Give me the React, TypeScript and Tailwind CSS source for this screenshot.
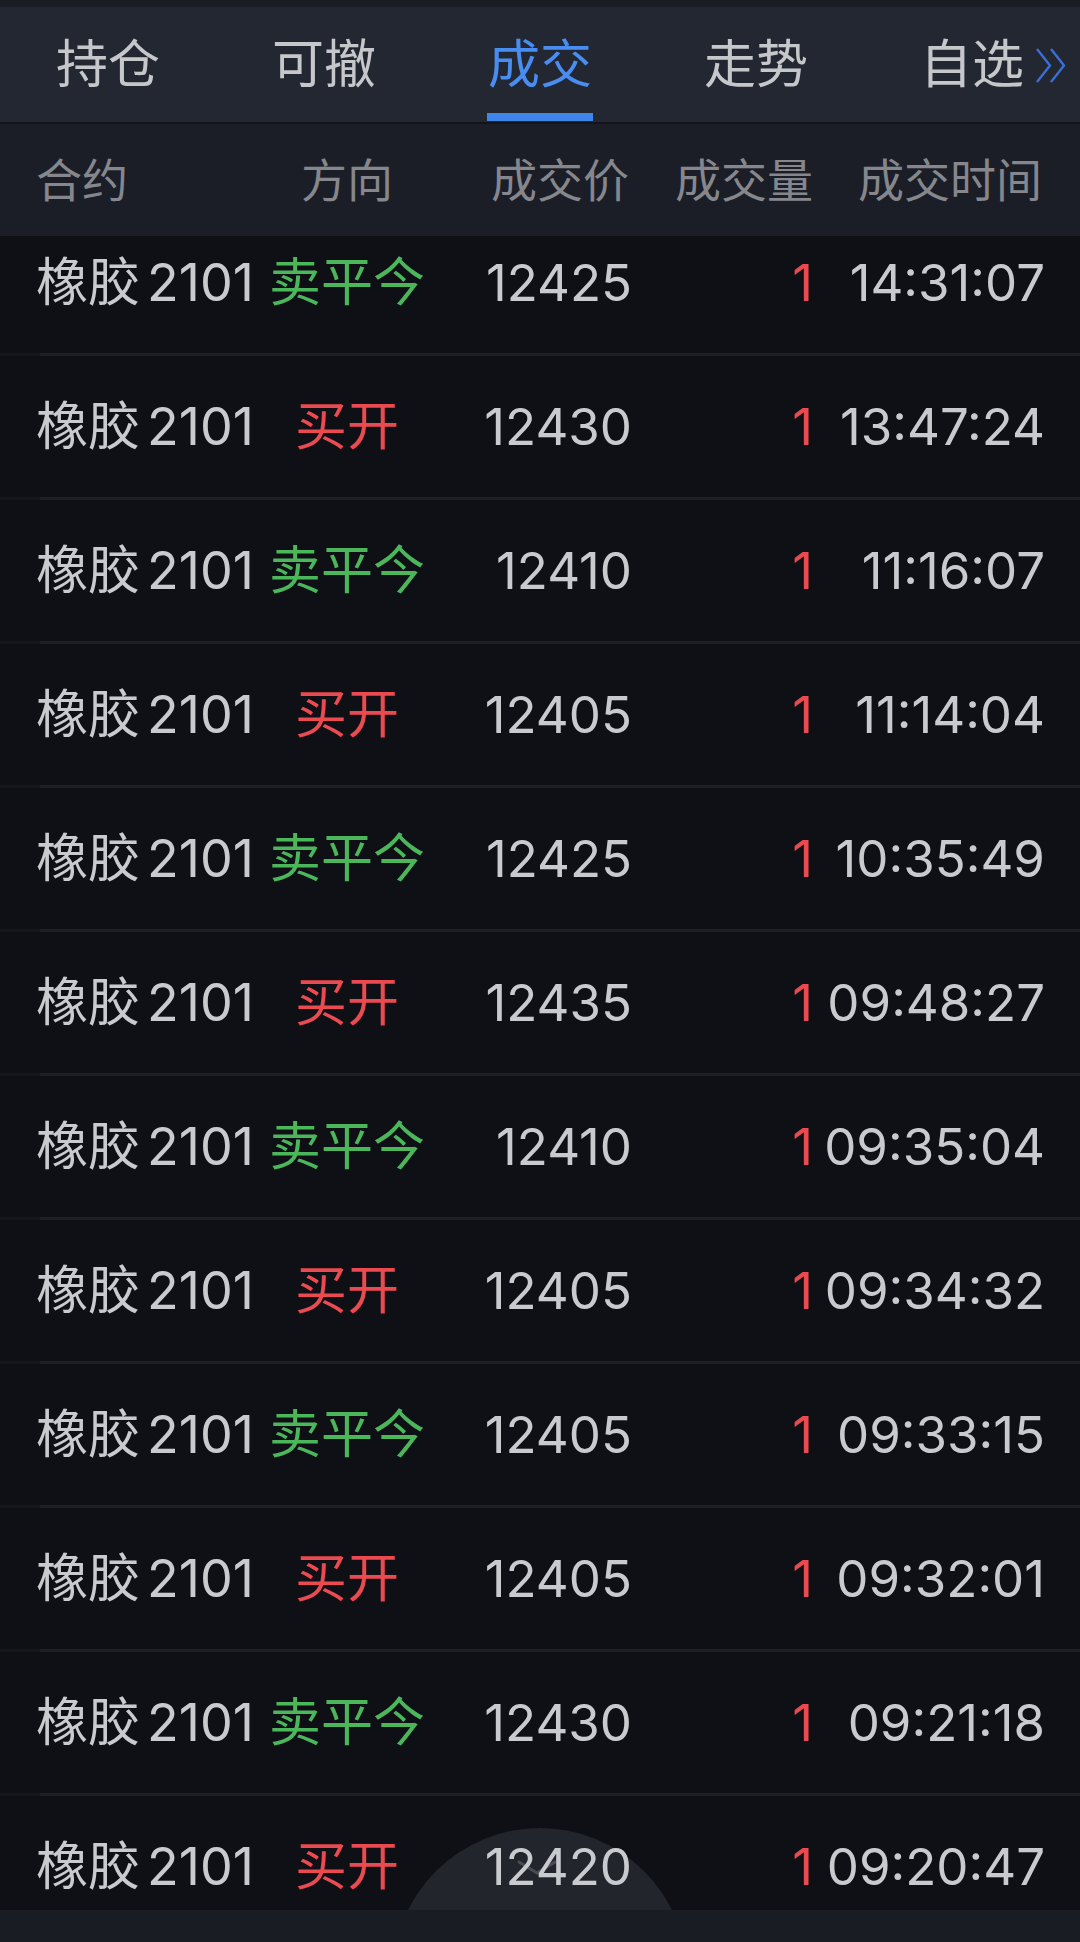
import React from 'react';

interface Trade {
  side: 'sell' | 'buy';
  price: string;
  time: string;
}

const trades: Trade[] = [
  { side: 'sell', price: '12425', time: '14:31:07' },
  { side: 'buy', price: '12430', time: '13:47:24' },
  { side: 'sell', price: '12410', time: '11:16:07' },
  { side: 'buy', price: '12405', time: '11:14:04' },
  { side: 'sell', price: '12425', time: '10:35:49' },
  { side: 'buy', price: '12435', time: '09:48:27' },
  { side: 'sell', price: '12410', time: '09:35:04' },
  { side: 'buy', price: '12405', time: '09:34:32' },
  { side: 'sell', price: '12405', time: '09:33:15' },
  { side: 'buy', price: '12405', time: '09:32:01' },
  { side: 'sell', price: '12430', time: '09:21:18' },
  { side: 'buy', price: '12420', time: '09:20:47' },
];

const tabs = ['持仓', '可撤', '成交', '走势', '自选'];

const TabBar: React.FC = () => (
  <div className="grid h-[115px] grid-cols-5 bg-[#232732]">
    {tabs.map((tab, i) => (
      <div key={tab} className="relative flex items-center justify-center">
        <span className={`whitespace-nowrap text-[52px] leading-none ${i === 2 ? 'text-[#4a8df0]' : 'text-[#c6c7cb]'}`}>{tab}</span>
        {i === 2 && <div className="absolute bottom-[1px] left-[55px] h-[8px] w-[106px] bg-[#3f86ec]" />}
        {i === 4 && (
          <svg className="absolute right-[13px] top-[41px] h-[35px] w-[32px]" viewBox="0 0 32 35" fill="none" stroke="#3b6fd4" strokeWidth="2.4">
            <path d="M2 1l13 16.5L2 34" />
            <path d="M16 1l13 16.5L16 34" />
          </svg>
        )}
      </div>
    ))}
  </div>
);

const Header: React.FC = () => (
  <div className="flex h-[112px] items-center bg-[#1b1e27] text-[46px] leading-none text-[#85878d]">
    <div className="w-[270px] whitespace-nowrap pl-[36px]">合约</div>
    <div className="flex w-[154px] justify-center whitespace-nowrap">方向</div>
    <div className="w-[208px] whitespace-nowrap pr-[3px] text-right">成交价</div>
    <div className="w-[181px] whitespace-nowrap text-right">成交量</div>
    <div className="w-[232px] whitespace-nowrap pr-[3px] text-right">成交时间</div>
  </div>
);

const Row: React.FC<{ trade: Trade }> = ({ trade }) => (
  <div className="relative z-10">
    <div className="flex h-[141px] items-center whitespace-nowrap text-[52px] leading-none text-[#c9cacd]">
      <div className="w-[270px] pl-[36px]">
        橡胶<span className="ml-[7px]">2101</span>
      </div>
      <div className={`flex w-[154px] justify-center ${trade.side === 'sell' ? 'text-[#4cb65a]' : 'text-[#ea4a50]'}`}>
        {trade.side === 'sell' ? '卖平今' : '买开'}
      </div>
      <div className="w-[208px] text-right text-[51px]">{trade.price}</div>
      <div className="w-[181px] text-right text-[51px] text-[#ea4a50]">1</div>
      <div className="w-[232px] text-right text-[51px]">{trade.time}</div>
    </div>
    <div className="flex h-[3px]">
      <div className="w-[40px] bg-[#15171e]" />
      <div className="flex-1 bg-[#1d2029]" />
    </div>
  </div>
);

export default function App() {
  return (
    <div className="flex h-[1942px] w-[1080px] flex-col overflow-hidden bg-[#0e1016] font-[Inter,'Noto_Sans_CJK_SC',sans-serif]">
      <div className="h-[7px] bg-[#1a1d24]" />
      <TabBar />
      <div className="h-[2px] bg-[#13151b]" />
      <Header />
      <div className="relative h-[1674px] overflow-hidden bg-[#0e1016]">
        <div className="absolute left-[393px] top-[1592px] h-[294px] w-[294px] rounded-full bg-[#23252d]" />
        <svg className="absolute left-[512px] top-[1620px] h-[24px] w-[50px]" viewBox="0 0 50 24" fill="none" stroke="#4a4c53" strokeWidth="3" strokeLinecap="round">
          <path d="M7 6l18 11 18-11" />
        </svg>
        <div className="mt-[-24px]">
          {trades.map((t, i) => (
            <Row key={i} trade={t} />
          ))}
        </div>
      </div>
      <div className="flex-1 bg-[#1a1c23]" />
    </div>
  );
}
